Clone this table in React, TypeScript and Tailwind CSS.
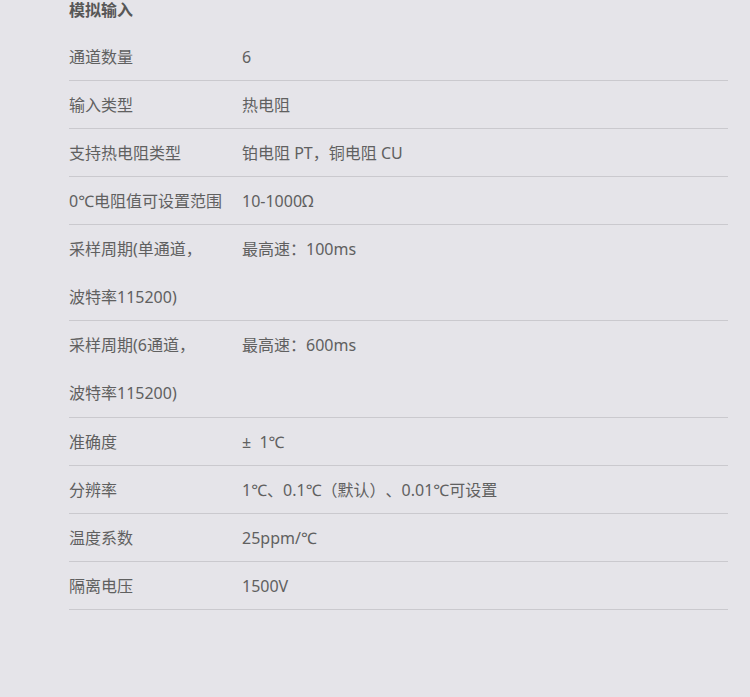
const rows: { label: React.ReactNode; value: string; h?: string }[] = [
  { label: "通道数量", value: "6" },
  { label: "输入类型", value: "热电阻" },
  { label: "支持热电阻类型", value: "铂电阻 PT，铜电阻 CU" },
  { label: "0℃电阻值可设置范围", value: "10-1000Ω" },
  {
    label: (
      <>
        采样周期(单通道，
        <br />
        波特率115200)
      </>
    ),
    value: "最高速：100ms",
    h: "h-[96px]",
  },
  {
    label: (
      <>
        采样周期(6通道，
        <br />
        波特率115200)
      </>
    ),
    value: "最高速：600ms",
    h: "h-[97px]",
  },
  { label: "准确度", value: "±\u00a0 1℃" },
  { label: "分辨率", value: "1℃、0.1℃（默认）、0.01℃可设置" },
  { label: "温度系数", value: "25ppm/℃" },
  { label: "隔离电压", value: "1500V" },
]

export default function App() {
  return (
    <div
      className="min-h-[697px] w-[750px] bg-[#e5e4e9] text-[16px] text-[#606060] [text-spacing-trim:space-all]"
      style={{ fontFamily: '"Noto Sans", "Noto Sans CJK SC", sans-serif' }}
    >
      <div className="ml-[69px] w-[659px]">
        <h3 className="h-[33px] text-[16px] font-bold leading-[21px] text-[#575757]">模拟输入</h3>
        {rows.map((r, i) => (
          <div
            key={i}
            className={`box-border flex items-start border-b border-[#cac9ce] ${r.h ?? "h-[48px]"}`}
          >
            <div className="w-[173px] shrink-0 leading-[48px]">{r.label}</div>
            <div className="leading-[48px]">{r.value}</div>
          </div>
        ))}
      </div>
    </div>
  )
}
